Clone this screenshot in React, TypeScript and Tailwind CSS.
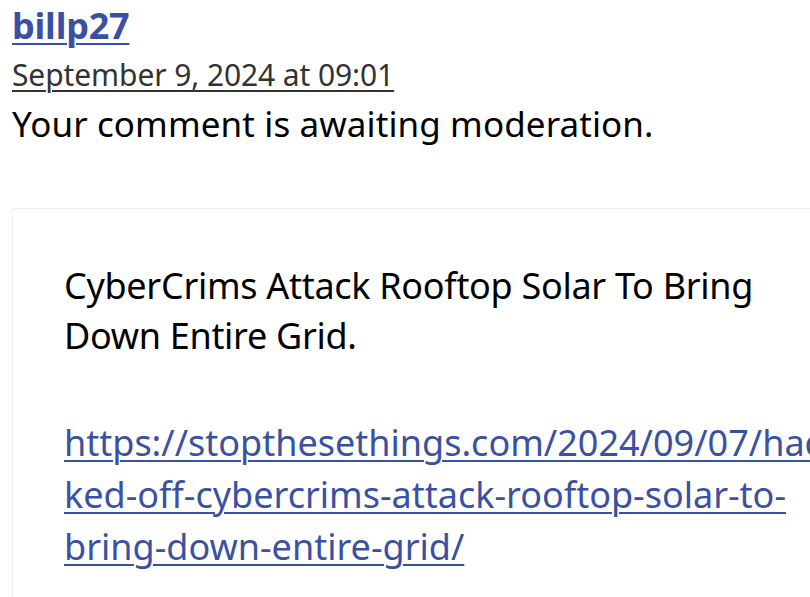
export default function App() {
  return (
    <div className="min-h-[597px] w-[810px] overflow-hidden bg-white pl-3 pt-px font-['Noto_Sans',_'Open_Sans',_sans-serif]">
      <a href="#" className="block text-[36px] font-bold leading-[50px] tracking-[-0.2px] text-[#3a51a3] underline decoration-2 underline-offset-[4px]">
        billp27
      </a>
      <a href="#" className="block text-[30px] leading-[48px] tracking-[-0.1px] text-[#333333] underline decoration-2 underline-offset-[4px]">
        September 9, 2024 at 09:01
      </a>
      <p className="text-[35px] leading-[50px] tracking-[0.1px] text-black">Your comment is awaiting moderation.</p>

      <div className="mt-[59px] w-[860px] border border-[#eeeeee] pb-10 pl-[51px] pt-[52px]">
        <p className="w-[752px] text-[36px] leading-[50px] tracking-[-0.3px] text-black">
          CyberCrims Attack Rooftop Solar To Bring Down Entire Grid.
        </p>
        <p className="mt-[56px] w-[770px] break-words text-[36px] leading-[52px] text-[#3a51a3]">
          <a href="#" className="underline decoration-2 underline-offset-[4px]">
            https://stopthesethings.com/2024/09/07/hacked-off-cybercrims-attack-rooftop-solar-to-bring-down-entire-grid/
          </a>
        </p>
      </div>
    </div>
  );
}
